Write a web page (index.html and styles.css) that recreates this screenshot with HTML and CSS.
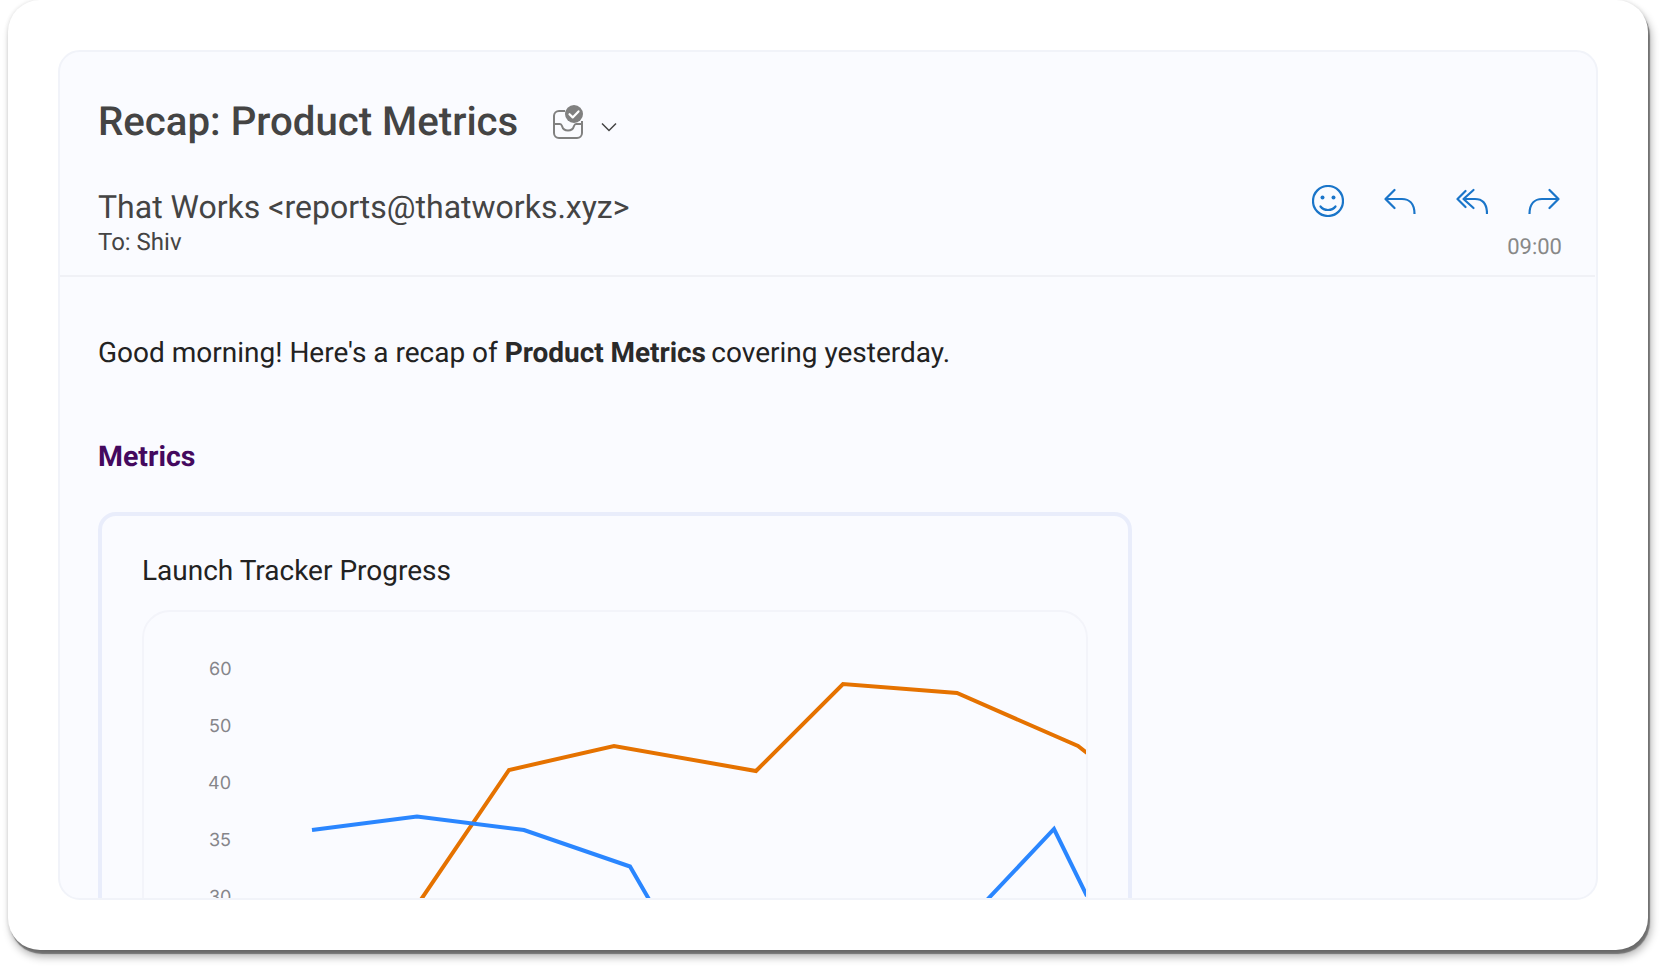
FILE: index.html
```html
<!DOCTYPE html>
<html lang="en">
<head>
  <meta charset="UTF-8" />
  <meta name="viewport" content="width=device-width, initial-scale=1" />
  <title>Recap: Product Metrics</title>
  <link rel="stylesheet" href="styles.css">
</head>
<body>
<div class="frame">
  <div class="mail-card">
    <div class="mail-head">
      <div class="subject-row">
        <h1 class="subject">Recap: Product Metrics</h1>
        <svg class="inbox-icon" width="32" height="36" viewBox="0 0 32 36" fill="none">
          <path d="M13 7H7a5 5 0 0 0-5 5v17a5 5 0 0 0 5 5h18a5 5 0 0 0 5-5V17" stroke="#808080" stroke-width="2"/>
          <path d="M2 20h6c1 0 1.500 .6 2 2 .8 3 3 4.500 6 4.500s5.200-1.500 6-4.500c.5-1.400 1-2 2-2h6" stroke="#808080" stroke-width="2"/>
          <circle cx="22" cy="10" r="9" fill="#808080"/>
          <path d="M17.500 10.200l3.200 3.200 5.800-6" stroke="#fff" stroke-width="2.200" stroke-linecap="round" stroke-linejoin="round"/>
        </svg>
        <svg class="chevron-icon" width="16" height="10" viewBox="0 0 16 10" fill="none">
          <path d="M1 1.500l7 7 7-7" stroke="#444" stroke-width="1.500"/>
        </svg>
      </div>
      <div class="sender-row">
        <div class="sender-info">
          <div class="sender">That Works &lt;reports@thatworks.xyz&gt;</div>
          <div class="recipient">To: Shiv</div>
        </div>
        <div class="mail-meta">
          <div class="actions">
            <svg width="32" height="32" viewBox="0 0 32 32" fill="none" stroke="#1a75c9" stroke-width="2.200">
              <circle cx="16" cy="16" r="15"/>
              <circle cx="10.500" cy="12.500" r="2" fill="#1a75c9" stroke="none"/>
              <circle cx="21.500" cy="12.500" r="2" fill="#1a75c9" stroke="none"/>
              <path d="M8.500 21.500c1.800 2.400 4.400 3.500 7.500 3.500s5.700-1.100 7.500-3.500" stroke-linecap="round"/>
            </svg>
            <svg width="32" height="32" viewBox="0 0 32 32" fill="none" stroke="#1a75c9" stroke-width="2.200">
              <path d="M10.500 5L1.500 14l9 9" stroke-linecap="round" stroke-linejoin="round"/>
              <path d="M1.500 14H18c7 0 12.500 4.500 12.500 15"/>
            </svg>
            <svg width="32" height="32" viewBox="0 0 32 32" fill="none" stroke="#1a75c9" stroke-width="2.200">
              <path d="M9.500 6L1.500 14l8 8" stroke-linecap="round" stroke-linejoin="round"/>
              <path d="M17.500 5L7.500 14l10 9" stroke-linecap="round" stroke-linejoin="round"/>
              <path d="M7.500 14H19c7 0 12 4.500 12 15"/>
            </svg>
            <svg width="32" height="32" viewBox="0 0 32 32" fill="none" stroke="#1a75c9" stroke-width="2.200">
              <path d="M21.500 5l9 9-9 9" stroke-linecap="round" stroke-linejoin="round"/>
              <path d="M30.500 14H14C7 14 1.500 18.500 1.500 29"/>
            </svg>
          </div>
          <div class="mail-time">09:00</div>
        </div>
      </div>
    </div>

    <div class="mail-body">
      <p class="intro">Good morning! Here's a recap of <strong>Product Metrics</strong> covering yesterday.</p>
      <h2 class="section-title">Metrics</h2>
      <div class="chart-card">
        <div class="chart-title">Launch Tracker Progress</div>
        <div class="chart-box">
          <svg class="chart" width="943" height="400" viewBox="144 612 943 400">
            <g class="axis">
              <text x="209" y="675">60</text>
              <text x="209" y="732">50</text>
              <text x="208" y="789">40</text>
              <text x="209" y="846">35</text>
              <text x="209" y="903">30</text>
            </g>
            <polyline class="line-orange" points="420,901 509,770 614,746 756,771 843,684 957,693 1078,746 1087,753"/>
            <polyline class="line-blue" points="312,830 417,816.500 524,830 630,866.500 650,901"/>
            <polyline class="line-blue" points="986,901 1054,829 1087,896"/>
          </svg>
        </div>
      </div>
    </div>
  </div>
</div>
</body>
</html>
```

FILE: styles.css
```css
body, html {
  margin: 0;
  padding: 0;
  background: #fff;
  font-family: Roboto, sans-serif;
  height: 100%;
  overflow: hidden;
  text-rendering: geometricPrecision;
}
.frame {
  width: 1640px;
  height: 950px;
  margin-left: 8px;
  padding: 50px 0 0 50px;
  box-sizing: border-box;
  background: #fff;
  border-radius: 32px;
  box-shadow: 2px 4px 1px rgba(0, 0, 0, 0.4), 3px 7px 9px rgba(0, 0, 0, 0.3), 0 0 4px rgba(0, 0, 0, 0.12);
}
.mail-card {
  width: 1540px;
  height: 850px;
  box-sizing: border-box;
  background: #fafbff;
  border: 2px solid #f1f3f9;
  border-radius: 22px;
  overflow: hidden;
}
.mail-head {
  padding: 48px 35px 0 38px;
  border-bottom: 2px solid #f0f1f6;
  height: 225px;
  box-sizing: border-box;
  margin-right: 1px;
}
.subject-row {
  display: flex;
  align-items: center;
  height: 44px;
}
.subject {
  margin: 0;
  font-size: 40.2px;
  line-height: 44px;
  font-weight: 500;
  color: #444;
}
.inbox-icon {
  margin-left: 34px;
  margin-top: 0;
}
.chevron-icon {
  margin-left: 17px;
  margin-top: 10px;
}
.sender-row {
  display: flex;
  justify-content: space-between;
  margin-top: 41px;
}
.sender-info {
  padding-top: 3px;
}
.sender {
  font-size: 32px;
  line-height: 38px;
  color: #444;
}
.recipient {
  margin-top: 2px;
  font-size: 24px;
  line-height: 28px;
  color: #444;
}
.mail-meta {
  display: flex;
  flex-direction: column;
  align-items: flex-end;
}
.actions {
  display: flex;
  gap: 40px;
}
.mail-time {
  margin-top: 18px;
  margin-right: -2px;
  font-size: 22px;
  line-height: 26px;
  color: #888;
}
.mail-body {
  padding: 0 38px;
}
.intro {
  margin: 0;
  padding-top: 58px;
  font-size: 28px;
  line-height: 36px;
  color: #222;
}
.intro strong {
  font-weight: 700;
  color: #2a2a2a;
  letter-spacing: -0.05px;
  margin-right: -1.5px;
}
.section-title {
  margin: 68px 0 0;
  font-size: 28.5px;
  line-height: 36px;
  font-weight: 700;
  color: #44095e;
}
.chart-card {
  width: 1034px;
  height: 500px;
  margin-top: 37px;
  padding: 37px 40px 0;
  box-sizing: border-box;
  border: 4px solid #e9edfb;
  border-radius: 18px;
}
.chart-title {
  font-size: 28px;
  line-height: 36px;
  color: #222;
}
.chart-box {
  margin-top: 21px;
  height: 400px;
  border: 2px solid #f3f4fa;
  border-radius: 28px;
  overflow: hidden;
}
.chart {
  display: block;
}
.axis text {
  font-family: Inter, sans-serif;
  font-size: 18px;
  fill: #85858a;
}
.line-orange, .line-blue {
  fill: none;
  stroke-width: 4;
  stroke-linejoin: miter;
}
.line-orange {
  stroke: #e57200;
}
.line-blue {
  stroke: #2a86ff;
}
```
